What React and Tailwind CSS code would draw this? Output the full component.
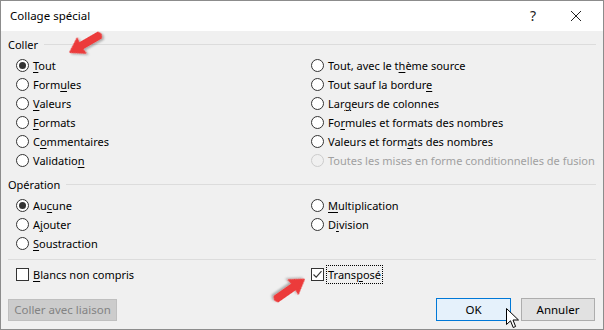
import React from 'react';

// Collage spécial dialog (Excel, Windows 10 look)

const U = ({ children }) => <span className="underline underline-offset-[2px]">{children}</span>;

const Radio = ({ checked, disabled, children }) => (
  <div className="flex h-[19px] items-center">
    <span
      className={`flex h-[13px] w-[13px] shrink-0 items-center justify-center rounded-full border ${
        disabled ? 'border-[#cccccc] bg-[#f0f0f0]' : 'border-[#333333] bg-white'
      }`}
    >
      {checked && <span className="h-[7px] w-[7px] rounded-full bg-[#333333]" />}
    </span>
    <span className={`ml-[4px] whitespace-nowrap ${disabled ? 'text-[#a0a0a0]' : 'text-black'}`}>{children}</span>
  </div>
);

const Checkbox = ({ checked, focused, children }) => (
  <div className="flex h-[19px] items-center">
    <span className="flex h-[13px] w-[13px] shrink-0 items-center justify-center border border-[#333333] bg-white">
      {checked && (
        <svg width="11" height="11" viewBox="0 0 11 11">
          <path d="M1.5 5.5 L4.2 8.2 L9.5 2.2" fill="none" stroke="#333" strokeWidth="1.1" />
        </svg>
      )}
    </span>
    <span
      className={`ml-[3px] whitespace-nowrap px-[1px] py-[3px] text-black ${
        focused ? 'outline outline-1 outline-dotted outline-black' : ''
      }`}
    >
      {children}
    </span>
  </div>
);

const GroupHeader = ({ label }) => (
  <div className="flex h-[16px] items-center">
    <span className="text-black">{label}</span>
    <div className="ml-[6px] h-px flex-1 bg-[#dcdcdc]" />
  </div>
);

const Arrow = ({ className, rotate }) => (
  <svg className={className} width="46" height="34" viewBox="0 0 46 34">
    <defs>
      <filter id={`sh${rotate}`} x="-30%" y="-30%" width="160%" height="160%">
        <feDropShadow dx="1" dy="2" stdDeviation="1.3" floodColor="#000" floodOpacity="0.3" />
      </filter>
    </defs>
    <g transform={`rotate(${rotate} 23 17)`} filter={`url(#sh${rotate})`}>
      <path
        d="M4 17 L18 8 L17 13.5 L39 13.5 Q42 17 39 20.5 L17 20.5 L18 26 Z"
        fill="#ec3b3b"
        stroke="#ec3b3b"
        strokeWidth="1"
        strokeLinejoin="round"
      />
    </g>
  </svg>
);

const Cursor = () => (
  <svg width="14" height="22" viewBox="0 0 14 22" className="absolute left-[505px] top-[307px]">
    <path
      d="M0.5 0.5 L0.5 16.5 L4.5 12.8 L7.2 19.5 L9.6 18.5 L7 12 L12.5 12 Z"
      fill="white"
      stroke="black"
      strokeWidth="1"
      strokeLinejoin="round"
    />
  </svg>
);

export default function App() {
  return (
    <div
      className="relative flex h-[330px] w-[604px] flex-col overflow-hidden border border-[#8c8c8c] bg-[#f0f0f0] text-[11px] leading-none text-black"
      style={{ fontFamily: '"Noto Sans", "Open Sans", Arial, sans-serif' }}
    >
      {/* title bar */}
      <div className="flex h-[30px] shrink-0 items-center bg-white pl-[9px] pr-[21px]">
        <span className="text-[11.5px] text-black">Collage spécial</span>
        <span className="ml-auto mr-[34px] text-[14px] text-[#222]">?</span>
        <svg width="12" height="12" viewBox="0 0 12 12">
          <path d="M1 1 L11 11 M11 1 L1 11" stroke="#222" strokeWidth="1" />
        </svg>
      </div>

      <div className="flex flex-1 flex-col pl-[7px] pr-[7px]">
        {/* Coller */}
        <div className="mt-[5px]">
          <GroupHeader label="Coller" />
        </div>
        <div className="mt-[4px] grid grid-cols-[295px_1fr] pl-[8px]">
          <div>
            <Radio checked><U>T</U>out</Radio>
            <Radio>Form<U>u</U>les</Radio>
            <Radio><U>V</U>aleurs</Radio>
            <Radio><U>F</U>ormats</Radio>
            <Radio>C<U>o</U>mmentaires</Radio>
            <Radio>Validatio<U>n</U></Radio>
          </div>
          <div>
            <Radio>Tout, avec le t<U>h</U>ème source</Radio>
            <Radio>Tout sauf la bordur<U>e</U></Radio>
            <Radio>Lar<U>g</U>eurs de colonnes</Radio>
            <Radio>Fo<U>r</U>mules et formats des nombres</Radio>
            <Radio>Valeurs et form<U>a</U>ts des nombres</Radio>
            <Radio disabled>Toutes les mises en forme conditionnelles de fusion</Radio>
          </div>
        </div>

        {/* Opération */}
        <div className="mt-[6px]">
          <GroupHeader label="Opération" />
        </div>
        <div className="mt-[4px] grid grid-cols-[295px_1fr] pl-[8px]">
          <div>
            <Radio checked>Au<U>c</U>une</Radio>
            <Radio>A<U>j</U>outer</Radio>
            <Radio><U>S</U>oustraction</Radio>
          </div>
          <div>
            <Radio><U>M</U>ultiplication</Radio>
            <Radio>D<U>i</U>vision</Radio>
          </div>
        </div>

        <div className="mt-[6px] h-px bg-[#dcdcdc]" />

        <div className="mt-[5px] grid grid-cols-[295px_1fr] pl-[8px]">
          <Checkbox><U>B</U>lancs non compris</Checkbox>
          <Checkbox checked focused>Trans<U>p</U>osé</Checkbox>
        </div>

        {/* buttons */}
        <div className="mt-[14px] flex items-center">
          <button className="flex h-[22px] w-[109px] items-center justify-center border border-[#bfbfbf] bg-[#cccccc] text-[11.5px] text-[#838383]">
            Coller avec liaison
          </button>
          <button className="ml-auto flex h-[23px] w-[75px] items-center justify-center border border-[#0078d7] bg-[#e5f1fb] text-[11.5px] text-black">
            OK
          </button>
          <button className="ml-[10px] mr-[1px] flex h-[23px] w-[74px] items-center justify-center border border-[#adadad] bg-[#e1e1e1] text-[11.5px] text-black">
            Annuler
          </button>
        </div>
      </div>

      <Arrow className="absolute left-[62px] top-[25px]" rotate={-30} />
      <Arrow className="absolute left-[265px] top-[272px]" rotate={145} />
      <Cursor />
    </div>
  );
}
